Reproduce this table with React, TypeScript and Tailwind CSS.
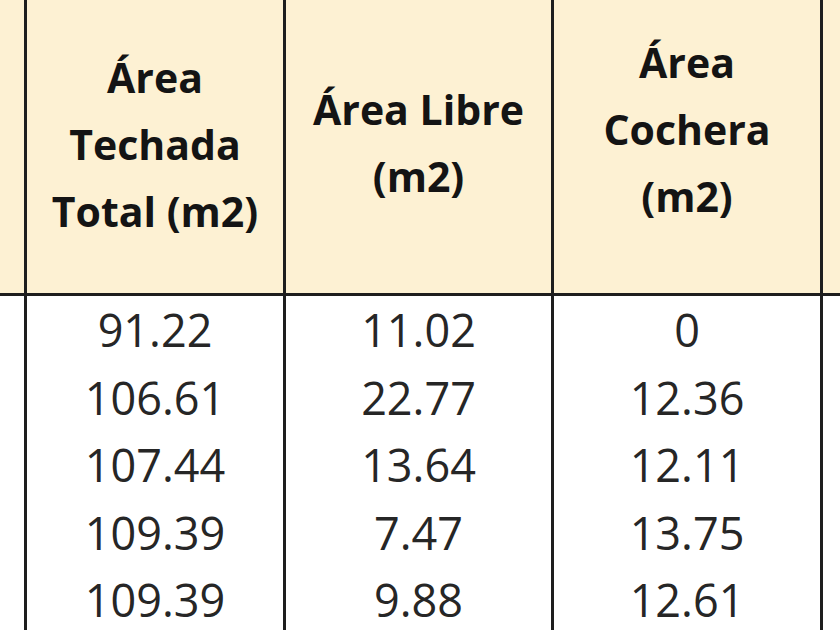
const headers = [
  { lines: ["Área", "Techada", "Total (m2)"], pad: "pt-[44px]" },
  { lines: ["Área Libre", "(m2)"], pad: "pt-[76px]" },
  { lines: ["Área", "Cochera", "(m2)"], pad: "pt-[29px]" },
];

const rows = [
  ["91.22", "11.02", "0"],
  ["106.61", "22.77", "12.36"],
  ["107.44", "13.64", "12.11"],
  ["109.39", "7.47", "13.75"],
  ["109.39", "9.88", "12.61"],
];

const font = { fontFamily: '"Open Sans", "Liberation Sans", sans-serif' };

export default function App() {
  return (
    <div className="h-[630px] w-[840px] overflow-hidden bg-white" style={font}>
      <div className="grid grid-cols-[24px_259px_268px_269px_1fr]">
        {/* header */}
        <div className="h-[296px] border-b-[3px] border-[#1e1e1e] bg-[#fdf1d3]" />
        {headers.map((h, i) => (
          <div
            key={i}
            className={`h-[296px] border-b-[3px] border-l-[3px] border-[#1e1e1e] bg-[#fdf1d3] text-center text-[41px] font-bold leading-[67px] text-[#141414] ${h.pad}`}
          >
            {h.lines.map((l) => (
              <div key={l}>{l}</div>
            ))}
          </div>
        ))}
        <div className="h-[296px] border-b-[3px] border-l-[3px] border-[#1e1e1e] bg-[#fdf1d3]" />

        {/* body */}
        <div />
        {[0, 1, 2].map((c) => (
          <div
            key={c}
            className="border-l-[3px] border-[#1e1e1e] text-center text-[45px] leading-[67.5px] text-[#262626]"
          >
            {rows.map((r, i) => (
              <div key={i}>{r[c]}</div>
            ))}
          </div>
        ))}
        <div className="border-l-[3px] border-[#1e1e1e]" />
      </div>
    </div>
  );
}
